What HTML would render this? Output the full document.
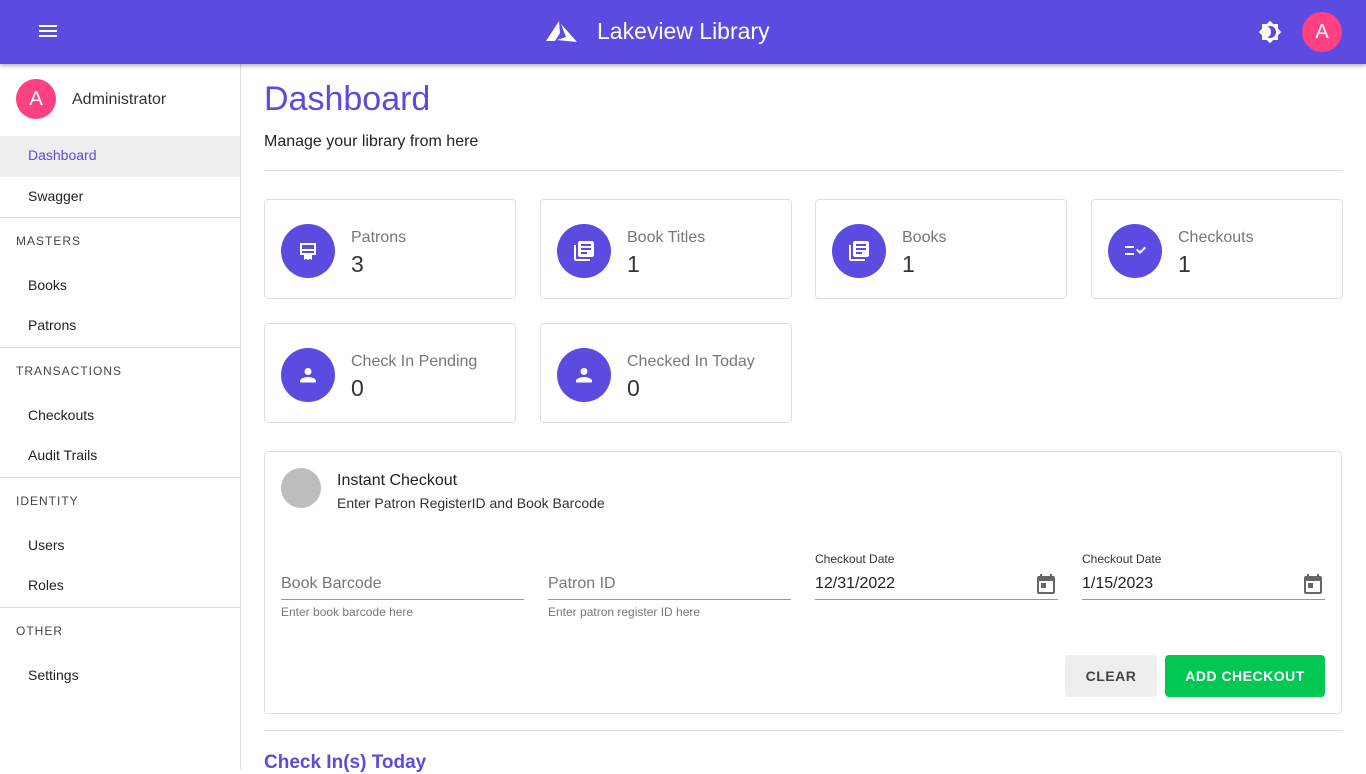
<!DOCTYPE html>
<html><head><meta charset="utf-8"><style>
*{box-sizing:border-box;margin:0;padding:0}
body{width:1366px;height:769px;overflow:hidden;font-family:"Liberation Sans",sans-serif;background:#fff;color:#333;position:relative}
.hdr{position:absolute;left:0;top:0;width:1366px;height:64px;background:#5b4be0;box-shadow:0 2px 4px rgba(0,0,0,.3);z-index:5;color:#fff}
.av{position:absolute;width:40px;height:40px;border-radius:50%;background:#ff4081;color:#fff;font-size:20px;text-align:center;line-height:40px}
.side{position:absolute;left:0;top:64px;width:241px;height:705px;border-right:1px solid #e0e0e0}
.side .it{position:absolute;left:28px;font-size:14px;color:#222}
.side .sec{position:absolute;left:16px;font-size:12px;letter-spacing:1px;color:#444}
.side .hr{position:absolute;left:0;width:240px;border-top:1px solid #e0e0e0}
.card{position:absolute;width:252px;height:100px;border:1px solid #e0e0e0;border-radius:4px}
.card .ic{position:absolute;left:16px;top:24px;width:54px;height:54px;border-radius:50%;background:#5b4be0}
.card .ic svg{position:absolute;left:15px;top:15px}
.card .t{position:absolute;left:86px;top:29px;font-size:16px;color:#777}
.card .v{position:absolute;left:86px;top:51px;font-size:23px;color:#333}
.fld{position:absolute;width:243px;border-bottom:1px solid #999;height:38px}
.lbl{position:absolute;font-size:16px;color:#777}
.hint{position:absolute;font-size:12px;color:#777}
</style></head><body>
<div class="hdr">
<div style="position:absolute;left:39px;top:25px;width:18px;height:2px;background:#fff;box-shadow:0 5px 0 #fff,0 10px 0 #fff"></div>
<svg style="position:absolute;left:546px;top:21px" width="32" height="22" viewBox="0 0 32 22"><path d="M13 0 L0 20 L9 20 L14 12 Z" fill="#fff"/><path d="M15 3 L20 16 L11 19 L31 21 Z" fill="#fff"/></svg>
<div style="position:absolute;left:597px;top:18px;font-size:23px">Lakeview Library</div>
<svg style="position:absolute;left:1258px;top:20px" width="24" height="24" viewBox="0 0 24 24"><path fill="#fff" d="M20 8.69V4h-4.69L12 .69 8.69 4H4v4.69L.69 12 4 15.31V20h4.69L12 23.31 15.31 20H20v-4.69L23.31 12 20 8.69zM12 18c-.89 0-1.74-.2-2.5-.55C11.56 16.5 13 14.42 13 12s-1.44-4.5-3.5-5.45C10.26 6.2 11.11 6 12 6c3.310 0 6 2.69 6 6s-2.69 6-6 6z"/></svg>
<div class="av" style="left:1302px;top:12px">A</div>
</div>
<div class="side">
<div class="av" style="left:16px;top:15px">A</div>
<div style="position:absolute;left:72px;top:27px;font-size:16px;color:#333">Administrator</div>
<div style="position:absolute;left:0;top:72px;width:240px;height:41px;background:#eee"></div>
<div class="it" style="top:83px;color:#5b4be0">Dashboard</div>
<div class="it" style="top:124px">Swagger</div>
<div class="hr" style="top:153px"></div>
<div class="sec" style="top:170px">MASTERS</div>
<div class="it" style="top:213px">Books</div>
<div class="it" style="top:253px">Patrons</div>
<div class="hr" style="top:283px"></div>
<div class="sec" style="top:300px">TRANSACTIONS</div>
<div class="it" style="top:343px">Checkouts</div>
<div class="it" style="top:383px">Audit Trails</div>
<div class="hr" style="top:413px"></div>
<div class="sec" style="top:430px">IDENTITY</div>
<div class="it" style="top:473px">Users</div>
<div class="it" style="top:513px">Roles</div>
<div class="hr" style="top:543px"></div>
<div class="sec" style="top:560px">OTHER</div>
<div class="it" style="top:603px">Settings</div>
</div>
<div style="position:absolute;left:264px;top:80px;font-size:34px;color:#5b4be0">Dashboard</div>
<div style="position:absolute;left:264px;top:133px;font-size:16px;color:#222">Manage your library from here</div>
<div style="position:absolute;left:264px;top:170px;width:1078px;border-top:1px solid #ddd"></div>

<div class="card" style="left:264px;top:199px"><div class="ic"><svg width="24" height="24" viewBox="0 0 24 24"><path fill="#fff" d="M4 4h16v12H4zM6 6v4h12V6zM6 12v2h12v-2zM8 16h8v5l-2-1.3-2 1.3-2-1.3L8 21z"/></svg></div><div class="t">Patrons</div><div class="v">3</div></div>
<div class="card" style="left:540px;top:199px"><div class="ic"><svg width="24" height="24" viewBox="0 0 24 24"><path fill="#fff" d="M4 6H2v14c0 1.1.9 2 2 2h14v-2H4V6zm16-4H8c-1.1 0-2 .9-2 2v12c0 1.1.9 2 2 2h12c1.1 0 2-.9 2-2V4c0-1.1-.9-2-2-2zm-1 9H9V9h10v2zm-4 4H9v-2h6v2zm4-8H9V5h10v2z"/></svg></div><div class="t">Book Titles</div><div class="v">1</div></div>
<div class="card" style="left:815px;top:199px"><div class="ic"><svg width="24" height="24" viewBox="0 0 24 24"><path fill="#fff" d="M4 6H2v14c0 1.1.9 2 2 2h14v-2H4V6zm16-4H8c-1.1 0-2 .9-2 2v12c0 1.1.9 2 2 2h12c1.1 0 2-.9 2-2V4c0-1.1-.9-2-2-2zm-1 9H9V9h10v2zm-4 4H9v-2h6v2zm4-8H9V5h10v2z"/></svg></div><div class="t">Books</div><div class="v">1</div></div>
<div class="card" style="left:1091px;top:199px"><div class="ic"><svg width="24" height="24" viewBox="0 0 24 24"><path fill="#fff" d="M2 7h9v2H2zM2 14h9v2H2zM13 11l1.4-1.4 2.6 2.6 4.6-4.6L23 9l-6 6z"/></svg></div><div class="t">Checkouts</div><div class="v">1</div></div>
<div class="card" style="left:264px;top:323px"><div class="ic"><svg width="24" height="24" viewBox="0 0 24 24"><circle cx="12" cy="8.5" r="3.5" fill="#fff"/><path fill="#fff" d="M4 18c0-2.7 5.3-4 8-4s8 1.3 8 4v1.5H4z"/></svg></div><div class="t">Check In Pending</div><div class="v">0</div></div>
<div class="card" style="left:540px;top:323px"><div class="ic"><svg width="24" height="24" viewBox="0 0 24 24"><circle cx="12" cy="8.5" r="3.5" fill="#fff"/><path fill="#fff" d="M4 18c0-2.7 5.3-4 8-4s8 1.3 8 4v1.5H4z"/></svg></div><div class="t">Checked In Today</div><div class="v">0</div></div>

<div style="position:absolute;left:264px;top:451px;width:1078px;height:263px;border:1px solid #e0e0e0;border-radius:4px">
<div style="position:absolute;left:16px;top:16px;width:40px;height:40px;border-radius:50%;background:#bdbdbd"></div>
<div style="position:absolute;left:72px;top:20px;font-size:16px;color:#222">Instant Checkout</div>
<div style="position:absolute;left:72px;top:43px;font-size:14px;color:#333">Enter Patron RegisterID and Book Barcode</div>
</div>
<div class="fld" style="left:281px;top:562px"></div><div class="lbl" style="left:281px;top:575px">Book Barcode</div><div class="hint" style="left:281px;top:605px">Enter book barcode here</div>
<div class="fld" style="left:548px;top:562px"></div><div class="lbl" style="left:548px;top:575px">Patron ID</div><div class="hint" style="left:548px;top:605px">Enter patron register ID here</div>
<div class="fld" style="left:815px;top:562px"></div><div class="hint" style="left:815px;top:552px;color:#333">Checkout Date</div><div class="lbl" style="left:815px;top:575px;color:#222">12/31/2022</div>
<div class="fld" style="left:1082px;top:562px"></div><div class="hint" style="left:1082px;top:552px;color:#333">Checkout Date</div><div class="lbl" style="left:1082px;top:575px;color:#222">1/15/2023</div>
<svg style="position:absolute;left:1034px;top:572px" width="24" height="24" viewBox="0 0 24 24"><path fill="#666" d="M19 4h-1V2h-2v2H8V2H6v2H5a2 2 0 0 0-2 2v14a2 2 0 0 0 2 2h14a2 2 0 0 0 2-2V6a2 2 0 0 0-2-2zm0 16H5V9h14v11zM7 11h5v5H7z"/></svg>
<svg style="position:absolute;left:1301px;top:572px" width="24" height="24" viewBox="0 0 24 24"><path fill="#666" d="M19 4h-1V2h-2v2H8V2H6v2H5a2 2 0 0 0-2 2v14a2 2 0 0 0 2 2h14a2 2 0 0 0 2-2V6a2 2 0 0 0-2-2zm0 16H5V9h14v11zM7 11h5v5H7z"/></svg>
<div style="position:absolute;left:1065px;top:655px;width:92px;height:42px;background:#eee;border-radius:4px;font-size:14px;font-weight:bold;color:#444;text-align:center;line-height:42px;letter-spacing:.5px">CLEAR</div>
<div style="position:absolute;left:1165px;top:655px;width:160px;height:42px;background:#00c853;border-radius:4px;font-size:14px;font-weight:bold;color:#fff;text-align:center;line-height:42px;letter-spacing:.5px">ADD CHECKOUT</div>
<div style="position:absolute;left:264px;top:730px;width:1078px;border-top:1px solid #ddd"></div>
<div style="position:absolute;left:264px;top:752px;font-size:19px;font-weight:bold;color:#5b4be0">Check In(s) Today</div>
</body></html>
